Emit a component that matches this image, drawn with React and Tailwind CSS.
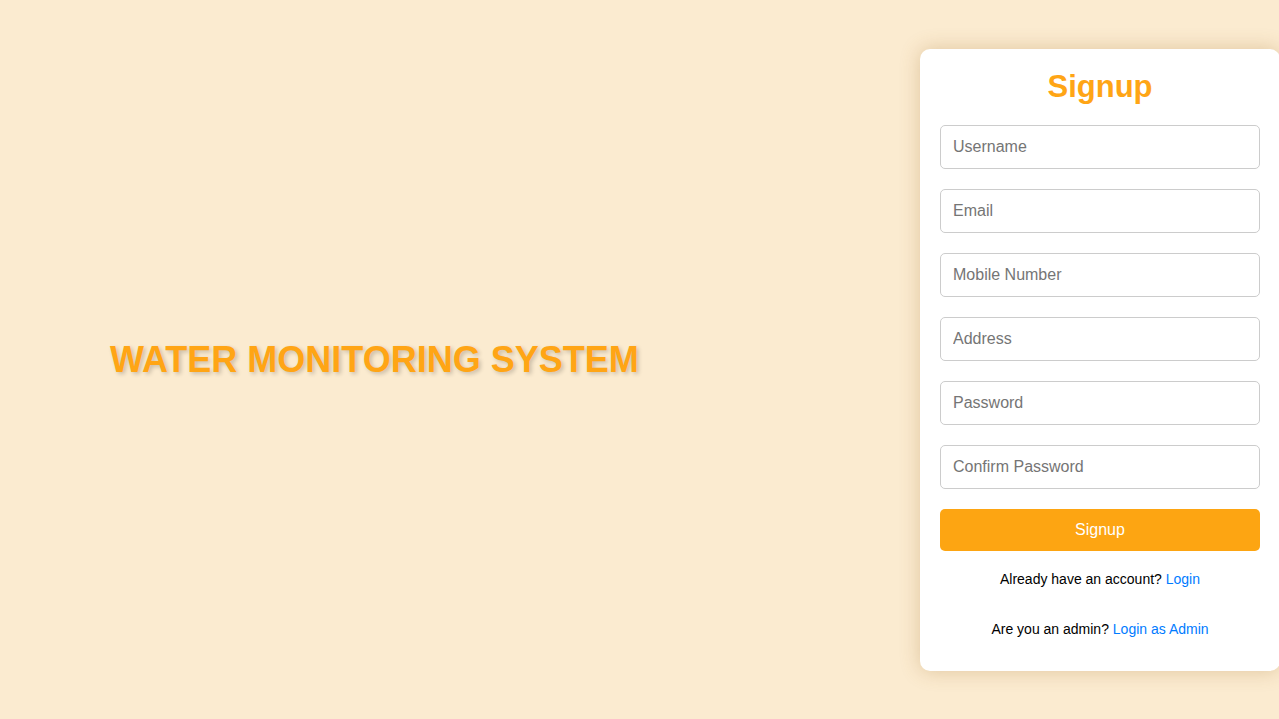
import React, { useState } from "react";

export default function App() {
  const [form, setForm] = useState({
    username: "",
    email: "",
    mobile: "",
    address: "",
    password: "",
    confirmPassword: "",
  });

  const fields = [
    { name: "username", type: "text", placeholder: "Username" },
    { name: "email", type: "email", placeholder: "Email" },
    { name: "mobile", type: "text", placeholder: "Mobile Number" },
    { name: "address", type: "text", placeholder: "Address" },
    { name: "password", type: "password", placeholder: "Password" },
    { name: "confirmPassword", type: "password", placeholder: "Confirm Password" },
  ];

  const handleChange = (e) => {
    setForm({ ...form, [e.target.name]: e.target.value });
  };

  return (
    <div
      className="flex h-screen w-full items-center overflow-hidden bg-[#fbebd0]"
      style={{ fontFamily: '"Liberation Sans", Arial, sans-serif' }}
    >
      {/* Left title */}
      <div className="flex-1 pl-[110px]">
        <h1 className="text-[36px] font-bold leading-[40px] text-[#ffa515] [text-shadow:2px_2px_4px_rgba(0,0,0,0.2)]">
          WATER MONITORING SYSTEM
        </h1>
      </div>

      {/* Signup card */}
      <div className="mr-[-1px] w-[360px] shrink-0 rounded-[10px] bg-white px-5 pb-[34px] pt-5 shadow-[0_0_20px_rgba(160,110,40,0.3)]">
        <h2 className="mb-5 text-center text-[31px] font-bold leading-[36px] text-[#ffa515]">
          Signup
        </h2>
        <form onSubmit={(e) => e.preventDefault()}>
          {fields.map((f) => (
            <input
              key={f.name}
              name={f.name}
              type={f.type}
              placeholder={f.placeholder}
              value={form[f.name]}
              onChange={handleChange}
              className="mb-5 block h-[44px] w-full rounded-[5px] border border-[#cccccc] px-3 text-[16px] text-black outline-none placeholder:text-[#757575]"
            />
          ))}
          <button
            type="submit"
            className="block h-[42px] w-full rounded-[5px] bg-[#fda512] text-[16px] text-white"
          >
            Signup
          </button>
        </form>
        <p className="mt-5 text-center text-[14px] leading-4 text-black">
          Already have an account? <a href="#" className="text-[#007bff]">Login</a>
        </p>
        <p className="mt-[34px] text-center text-[14px] leading-4 text-black">
          Are you an admin? <a href="#" className="text-[#007bff]">Login as Admin</a>
        </p>
      </div>
    </div>
  );
}
